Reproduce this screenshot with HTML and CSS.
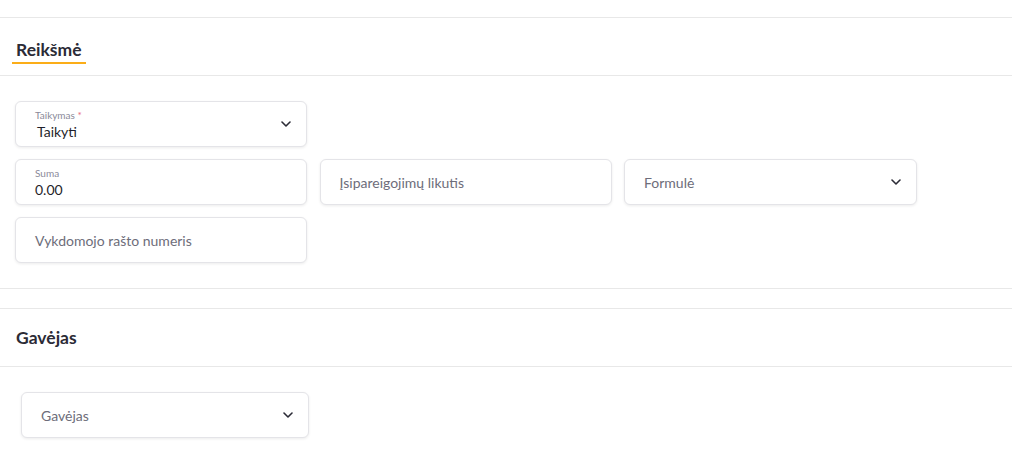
FILE: index.html
```html
<!DOCTYPE html>
<html lang="lt">
<head>
    <meta charset="UTF-8">
    <meta name="viewport" content="width=device-width, initial-scale=1.0">
    <title>Reikšmė</title>
    <link rel="stylesheet" href="styles.css">
</head>
<body>
    <div class="top-spacer"></div>

    <div class="tabs">
        <div class="tab active">Reikšmė</div>
    </div>

    <div class="form-area">
        <div class="form-row">
            <div class="field select filled">
                <div class="field-text">
                    <span class="field-label">Taikymas <span class="req">*</span></span>
                    <span class="field-value">Taikyti</span>
                </div>
                <svg class="chevron" viewBox="0 0 10 6" width="10" height="6"><path d="M1 1l4 4 4-4" fill="none" stroke="#2b2b36" stroke-width="1.6" stroke-linecap="round" stroke-linejoin="round"/></svg>
            </div>
        </div>
        <div class="form-row">
            <div class="field filled">
                <div class="field-text">
                    <span class="field-label">Suma</span>
                    <span class="field-value">0.00</span>
                </div>
            </div>
            <div class="field">
                <span class="placeholder">Įsipareigojimų likutis</span>
            </div>
            <div class="field select">
                <span class="placeholder">Formulė</span>
                <svg class="chevron" viewBox="0 0 10 6" width="10" height="6"><path d="M1 1l4 4 4-4" fill="none" stroke="#2b2b36" stroke-width="1.6" stroke-linecap="round" stroke-linejoin="round"/></svg>
            </div>
        </div>
        <div class="form-row">
            <div class="field">
                <span class="placeholder">Vykdomojo rašto numeris</span>
            </div>
        </div>
    </div>

    <div class="section-gap"></div>

    <div class="section-head">
        <h2>Gavėjas</h2>
    </div>

    <div class="form-area indent">
        <div class="field select wide">
            <span class="placeholder">Gavėjas</span>
            <svg class="chevron" viewBox="0 0 10 6" width="10" height="6"><path d="M1 1l4 4 4-4" fill="none" stroke="#2b2b36" stroke-width="1.6" stroke-linecap="round" stroke-linejoin="round"/></svg>
        </div>
    </div>
</body>
</html>
```

FILE: styles.css
```css
/* Общие стили */
body {
    margin: 0;
    font-family: Lato, "Open Sans", Arial, sans-serif;
    background-color: #ffffff;
    color: #2b2b36;
}

.top-spacer {
    height: 17px;
    border-bottom: 1px solid #e8e8e8;
}

.tabs {
    display: flex;
    height: 57px;
    padding-left: 12px;
    border-bottom: 1px solid #e8e8e8;
}

.tab {
    display: flex;
    align-items: center;
    padding: 0 4px;
    margin-top: 18px;
    height: 26px;
    font-size: 17.5px;
    font-weight: 700;
    color: #2b2b36;
    border-bottom: 2.5px solid transparent;
}

.tab.active {
    border-bottom-color: #fbad18;
}

.form-area {
    padding: 25px 15px 25px;
    display: flex;
    flex-direction: column;
    gap: 12px;
    border-bottom: 1px solid #e8e8e8;
}

.form-area.indent {
    padding-left: 21px;
    border-bottom: none;
}

.form-row {
    display: grid;
    grid-template-columns: 292px 292px 293px;
    column-gap: 12.5px;
}

.field {
    box-sizing: border-box;
    height: 46px;
    border: 1px solid #e4e4e8;
    border-radius: 6px;
    box-shadow: 0 1px 3px rgba(0, 0, 0, 0.08);
    padding: 0 15px 0 19px;
    display: flex;
    align-items: center;
    justify-content: space-between;
    background: #fff;
}

.field.wide {
    width: 288px;
}

.field-text {
    display: flex;
    flex-direction: column;
}

.field-label {
    font-size: 10px;
    color: #8a8a99;
    line-height: 11px;
    margin-top: 2px;
}

.req {
    color: #e8667a;
}

.field-value {
    font-size: 14px;
    line-height: 18px;
    color: #1f1f2b;
    margin-top: 2px;
}

.select .field-value {
    padding-left: 2px;
}

.placeholder {
    font-size: 14px;
    color: #6d6d7a;
}

.chevron {
    flex-shrink: 0;
}

.section-gap {
    height: 19px;
    border-bottom: 1px solid #e8e8e8;
}

.section-head {
    height: 57px;
    display: flex;
    align-items: center;
    padding-left: 16px;
    border-bottom: 1px solid #e8e8e8;
}

.section-head h2 {
    margin: 0;
    font-size: 17.5px;
    font-weight: 700;
    color: #2b2b36;
}
```
